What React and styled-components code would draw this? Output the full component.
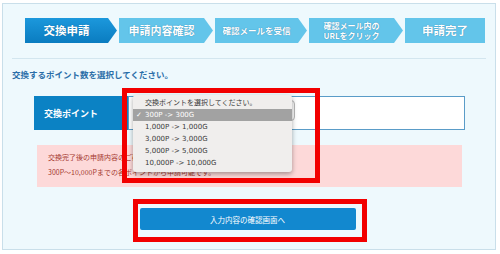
import React from "react";
import styled, { createGlobalStyle } from "styled-components";

const Global = createGlobalStyle`
  html, body { margin: 0; padding: 0; background: #ffffff; }
  body { font-family: "Noto Sans CJK JP", "Noto Sans", sans-serif; }
  * { box-sizing: border-box; }
`;

const Page = styled.div`
  width: 500px;
  height: 254px;
  padding: 3px 4px 4px 2px;
`;

const Panel = styled.div`
  position: relative;
  width: 494px;
  height: 247px;
  background: #eef9fd;
  border: 1px solid #c9dfea;
  padding: 14px 0 0 0;
`;

const Steps = styled.div`
  display: flex;
  gap: 2px;
  padding-left: 22px;
`;

const Step = styled.div`
  width: ${(p) => p.$w}px;
  height: 25px;
  display: flex;
  align-items: center;
  justify-content: center;
  padding-right: ${(p) => (p.$last ? 0 : 9)}px;
  background: ${(p) =>
    p.$active ? "linear-gradient(#1c98dc, #0a7cc0)" : "#63c5ea"};
  clip-path: ${(p) =>
    p.$last
      ? "none"
      : "polygon(0 0, calc(100% - 9px) 0, 100% 50%, calc(100% - 9px) 100%, 0 100%)"};
  color: #ffffff;
  font-weight: 700;
  font-size: ${(p) => p.$fs}px;
  line-height: 1.15;
  text-align: center;
  white-space: pre-line;
  text-shadow: 0 0 1px rgba(0, 70, 120, 0.6);
`;

const Divider = styled.div`
  height: 1px;
  margin: 15px 9px 0 9px;
  background: #d3e6ef;
`;

const Heading = styled.div`
  margin: 9px 0 0 9px;
  font-size: 8.5px;
  line-height: 12px;
  font-weight: 700;
  color: #2a6ea8;
`;

const FormRow = styled.div`
  display: flex;
  margin: 16px 0 0 31px;
  width: 431px;
  height: 34px;
`;

const Label = styled.div`
  width: 94px;
  background: #0b82c4;
  color: #ffffff;
  font-size: 9px;
  font-weight: 700;
  display: flex;
  align-items: center;
  padding-left: 10px;
`;

const InputCell = styled.div`
  flex: 1;
  background: #ffffff;
  border: 1px solid #5a9cc8;
  padding: 3px 0 0 7px;
`;

const SelectBox = styled.div`
  width: 159px;
  height: 21px;
  border: 1px solid #b8b8b8;
  border-radius: 4px;
  background: #fafafa;
`;

const Notice = styled.div`
  margin: 15px 0 0 34px;
  width: 425px;
  height: 42px;
  background: #fdd9d9;
  padding: 5px 0 0 11px;
  font-size: 7px;
  line-height: 15px;
  color: #a53a30;
  white-space: nowrap;
  overflow: hidden;
`;

const ButtonRow = styled.div`
  display: flex;
  justify-content: center;
  margin-top: 21px;
  padding-right: 3px;
`;

const Button = styled.button`
  width: 216px;
  height: 22px;
  border: none;
  border-radius: 2px;
  background: #1288cf;
  color: #ffffff;
  font-family: "Noto Sans CJK JP", sans-serif;
  font-size: 7.5px;
  padding: 0;
`;

const RedFrame = styled.div`
  position: absolute;
  left: ${(p) => p.$x}px;
  top: ${(p) => p.$y}px;
  width: ${(p) => p.$w}px;
  height: ${(p) => p.$h}px;
  border: 5px solid #f20000;
  z-index: 3;
`;

const Menu = styled.div`
  position: absolute;
  left: 130px;
  top: 91px;
  width: 159px;
  padding: 2px 0 3px 0;
  background: #f0eeed;
  border-radius: 3px;
  box-shadow: 0 2px 5px rgba(0, 0, 0, 0.35);
  z-index: 2;
`;

const MenuItem = styled.div`
  position: relative;
  height: 12px;
  line-height: 12px;
  padding-left: 12px;
  font-family: "DejaVu Sans", "Noto Sans CJK JP", sans-serif;
  font-size: 7px;
  color: ${(p) => (p.$selected ? "#ffffff" : "#3a3a3a")};
  background: ${(p) => (p.$selected ? "#a2a2a2" : "transparent")};
  white-space: nowrap;
`;

const Check = styled.span`
  position: absolute;
  left: 3px;
  top: 0;
  font-size: 7px;
`;

const steps = [
  { t: "交換申請", w: 92, fs: 11.5, active: true },
  { t: "申請内容確認", w: 94, fs: 11 },
  { t: "確認メールを受信", w: 92, fs: 8.5 },
  { t: "確認メール内の\nURLをクリック", w: 94, fs: 8 },
  { t: "申請完了", w: 80, fs: 11.5, last: true },
];

const options = [
  "交換ポイントを選択してください。",
  "300P -> 300G",
  "1,000P -> 1,000G",
  "3,000P -> 3,000G",
  "5,000P -> 5,000G",
  "10,000P -> 10,000G",
];

export default function App() {
  return (
    <>
      <Global />
      <Page>
        <Panel>
          <Steps>
            {steps.map((s) => (
              <Step key={s.t} $w={s.w} $fs={s.fs} $active={s.active} $last={s.last}>
                {s.t}
              </Step>
            ))}
          </Steps>
          <Divider />
          <Heading>交換するポイント数を選択してください。</Heading>
          <FormRow>
            <Label>交換ポイント</Label>
            <InputCell>
              <SelectBox />
            </InputCell>
          </FormRow>
          <Notice>
            交換完了後の申請内容のご確認はマイページから行えます。
            <br />
            300P～10,000Pまでの各ポイントから申請可能です。
          </Notice>
          <ButtonRow>
            <Button>入力内容の確認画面へ</Button>
          </ButtonRow>

          <Menu>
            {options.map((o, i) => (
              <MenuItem key={o} $selected={i === 1}>
                {i === 1 && <Check>✓</Check>}
                {o}
              </MenuItem>
            ))}
          </Menu>
          <RedFrame $x={119} $y={84} $w={198} $h={95} />
          <RedFrame $x={130} $y={195} $w={234} $h={43} />
        </Panel>
      </Page>
    </>
  );
}
